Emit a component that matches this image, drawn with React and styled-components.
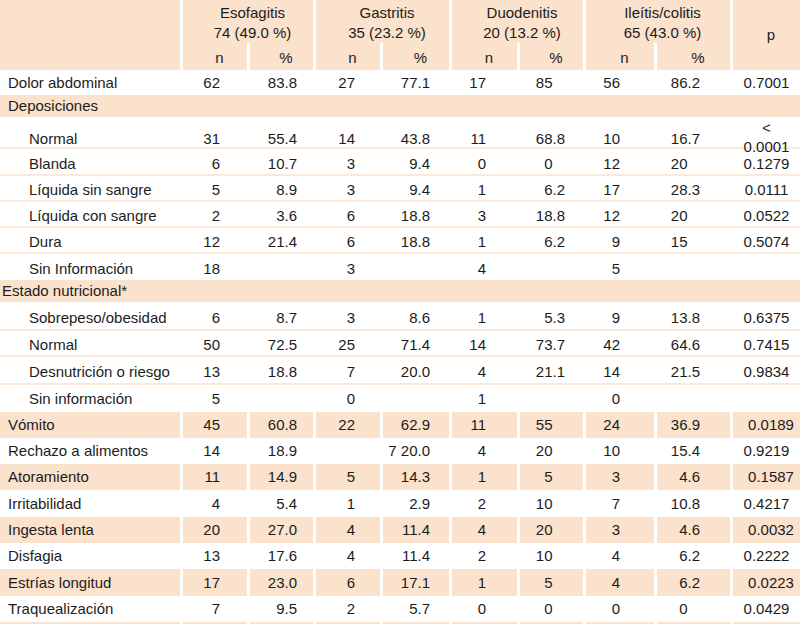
import React from 'react';
import styled, { createGlobalStyle } from 'styled-components';

const PEACH = '#fae2cc';
const LINE = '#fbe8d8';
const COLS = '180px 64px 63px 64px 66px 65px 63px 68px 73px 67px';

const GlobalStyle = createGlobalStyle`
  html, body {
    margin: 0;
    padding: 0;
    background: #fff;
    overflow: hidden;
  }
`;

const Table = styled.div`
  width: 800px;
  font-family: "Liberation Sans", Arial, sans-serif;
  font-size: 15px;
  line-height: 20px;
  color: #1c1c1c;
`;

const Head = styled.div`
  display: grid;
  grid-template-columns: ${COLS};
  grid-template-rows: 43px 27px;
  column-gap: 3px;
`;

const HeadCell = styled.div`
  background: ${PEACH};
  grid-row: ${p => p.$rows || 'auto'};
  grid-column: ${p => p.$cols || 'auto'};
  display: flex;
  flex-direction: column;
  align-items: center;
  justify-content: ${p => (p.$top ? 'flex-start' : 'center')};
  padding-left: 9px;
  padding-top: ${p => p.$pt || 0}px;
  text-align: center;
`;

const Row = styled.div`
  box-sizing: border-box;
  display: grid;
  grid-template-columns: ${COLS};
  column-gap: 3px;
  height: ${p => p.$h}px;
  padding-top: ${p => p.$pt || 0}px;
  border-bottom: ${p => (p.$line ? `2px solid ${LINE}` : '0')};
`;

const GroupRow = styled.div`
  height: ${p => p.$h}px;
  background: ${PEACH};
  display: flex;
  align-items: center;
  padding-left: ${p => p.$indent}px;
`;

const Cell = styled.div`
  background: ${p => (p.$fill ? PEACH : 'transparent')};
  display: flex;
  align-items: center;
  justify-content: ${p => p.$align || 'flex-end'};
  padding-left: ${p => p.$pl || 0}px;
  padding-right: ${p => p.$pr || 0}px;
  white-space: nowrap;
`;

const Frac = styled.span`
  display: inline-block;
  width: 12.5px;
  text-align: left;
`;

const PStack = styled.div`
  line-height: 18.5px;
  margin-top: -2px;
  text-align: center;
`;

// right padding per data column: n / % pairs
const NUM_COLS = [
  { pct: false, pr: 27 },
  { pct: true, pr: 16 },
  { pct: false, pr: 25 },
  { pct: true, pr: 19 },
  { pct: false, pr: 31 },
  { pct: true, pr: 18 },
  { pct: false, pr: 34 },
  { pct: true, pr: 30 },
];

// h is the full row height, line included; pt nudges the text down
const rows = [
  { label: 'Dolor abdominal', h: 25, v: ['62', '83.8', '27', '77.1', '17', '85', '56', '86.2'], p: '0.7001' },
  { group: 'Deposiciones', h: 22, indent: 8 },
  { label: 'Normal', sub: true, pt: 4, h: 32, line: true, v: ['31', '55.4', '14', '43.8', '11', '68.8', '10', '16.7'], p: '<|0.0001' },
  { label: 'Blanda', sub: true, pt: 4, h: 27, line: true, v: ['6', '10.7', '3', '9.4', '0', '0', '12', '20'], p: '0.1279' },
  { label: 'Líquida sin sangre', sub: true, pt: 4, h: 26, line: true, v: ['5', '8.9', '3', '9.4', '1', '6.2', '17', '28.3'], p: '0.0111' },
  { label: 'Líquida con sangre', sub: true, pt: 4, h: 26, line: true, v: ['2', '3.6', '6', '18.8', '3', '18.8', '12', '20'], p: '0.0522' },
  { label: 'Dura', sub: true, pt: 4, h: 26, line: true, v: ['12', '21.4', '6', '18.8', '1', '6.2', '9', '15'], p: '0.5074' },
  { label: 'Sin Información', sub: true, pt: 4, h: 26, v: ['18', '', '3', '', '4', '', '5', ''], p: '' },
  { group: 'Estado nutricional*', h: 22, indent: 2 },
  { label: 'Sobrepeso/obesidad', sub: true, pt: 4, h: 29, line: true, v: ['6', '8.7', '3', '8.6', '1', '5.3', '9', '13.8'], p: '0.6375' },
  { label: 'Normal', sub: true, pt: 4, h: 26, line: true, v: ['50', '72.5', '25', '71.4', '14', '73.7', '42', '64.6'], p: '0.7415' },
  { label: 'Desnutrición o riesgo', sub: true, pt: 4, h: 28, line: true, v: ['13', '18.8', '7', '20.0', '4', '21.1', '14', '21.5'], p: '0.9834' },
  { label: 'Sin información', sub: true, pt: 0, h: 27, v: ['5', '', '0', '', '1', '', '0', ''], p: '' },
  { label: 'Vómito', fill: true, h: 26, v: ['45', '60.8', '22', '62.9', '11', '55', '24', '36.9'], p: '0.0189' },
  { label: 'Rechazo a alimentos', h: 26, v: ['14', '18.9', '', '7 20.0', '4', '20', '10', '15.4'], p: '0.9219' },
  { label: 'Atoramiento', fill: true, h: 26, v: ['11', '14.9', '5', '14.3', '1', '5', '3', '4.6'], p: '0.1587' },
  { label: 'Irritabilidad', h: 27, v: ['4', '5.4', '1', '2.9', '2', '10', '7', '10.8'], p: '0.4217' },
  { label: 'Ingesta lenta', fill: true, h: 26, v: ['20', '27.0', '4', '11.4', '4', '20', '3', '4.6'], p: '0.0032' },
  { label: 'Disfagia', h: 26, v: ['13', '17.6', '4', '11.4', '2', '10', '4', '6.2'], p: '0.2222' },
  { label: 'Estrías longitud', fill: true, h: 27, v: ['17', '23.0', '6', '17.1', '1', '5', '4', '6.2'], p: '0.0223' },
  { label: 'Traquealización', h: 26, v: ['7', '9.5', '2', '5.7', '0', '0', '0', '0'], p: '0.0429' },
  { label: '', fill: true, h: 26, v: ['', '', '', '', '', '', '', ''], p: '' },
];

const Pct = ({ value }) => {
  if (!value) return null;
  const dot = value.indexOf('.');
  const whole = dot >= 0 ? value.slice(0, dot) : value;
  const frac = dot >= 0 ? value.slice(dot) : '';
  return (
    <>
      {whole}
      <Frac>{frac}</Frac>
    </>
  );
};

const PValue = ({ value }) => {
  if (value.includes('|')) {
    const [a, b] = value.split('|');
    return (
      <PStack>
        {a}
        <br />
        {b}
      </PStack>
    );
  }
  return value;
};

const groups = [
  { name: 'Esofagitis', total: '74 (49.0 %)' },
  { name: 'Gastritis', total: '35 (23.2 %)' },
  { name: 'Duodenitis', total: '20 (13.2 %)' },
  { name: 'Ileítis/colitis', total: '65 (43.0 %)' },
];

export default function App() {
  return (
    <>
      <GlobalStyle />
      <Table>
        <Head>
          <HeadCell $rows="1 / 3" $cols="1" />
          {groups.map((g, i) => (
            <HeadCell key={g.name} $rows="1" $cols={`${2 + i * 2} / span 2`} $top $pt={3}>
              <span>{g.name}</span>
              <span>{g.total}</span>
            </HeadCell>
          ))}
          <HeadCell $rows="1 / 3" $cols="10">p</HeadCell>
          {groups.map((g, i) => (
            <React.Fragment key={g.name + 'sub'}>
              <HeadCell $rows="2" $cols={`${2 + i * 2}`} $pt={3}>n</HeadCell>
              <HeadCell $rows="2" $cols={`${3 + i * 2}`} $pt={3}>%</HeadCell>
            </React.Fragment>
          ))}
        </Head>
        {rows.map((r, idx) =>
          r.group ? (
            <GroupRow key={idx} $h={r.h} $indent={r.indent}>{r.group}</GroupRow>
          ) : (
            <Row key={idx} $h={r.h} $line={r.line} $pt={r.pt}>
              <Cell $fill={r.fill} $align="flex-start" $pl={r.sub ? 29 : 8}>{r.label}</Cell>
              {r.v.map((val, i) => (
                <Cell key={i} $fill={r.fill} $pr={NUM_COLS[i].pr}>
                  {NUM_COLS[i].pct ? <Pct value={val} /> : val}
                </Cell>
              ))}
              <Cell $fill={r.fill} $align="center" $pl={r.fill ? 9 : 0}>
                <PValue value={r.p} />
              </Cell>
            </Row>
          )
        )}
      </Table>
    </>
  );
}
